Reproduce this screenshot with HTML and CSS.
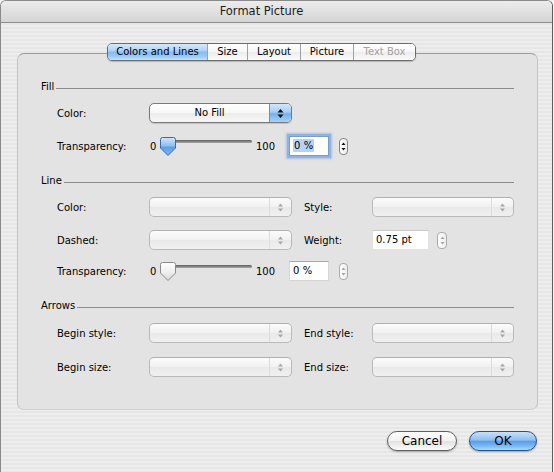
FILE: index.html
```html
<!DOCTYPE html>
<html lang="en">
<head>
<meta charset="utf-8">
<title>Format Picture</title>
<link rel="stylesheet" href="styles.css">
</head>
<body>
<div class="window">
  <div class="titlebar">Format Picture</div>
  <div class="content">
    <div class="tabs">
      <div class="tab tab-1 selected">Colors and Lines</div>
      <div class="tab tab-2">Size</div>
      <div class="tab tab-3">Layout</div>
      <div class="tab tab-4">Picture</div>
      <div class="tab tab-5 disabled">Text Box</div>
    </div>
    <div class="groupbox">
      <div class="section-head"><span class="section-title">Fill</span><div class="rule"></div></div>
      <div class="row row-first">
        <span class="lbl">Color:</span>
        <div class="popup popup-active">
          <span class="popup-text">No Fill</span>
          <span class="popup-arrows"><svg width="7" height="11" viewBox="0 0 7 11"><path d="M3.5 1 L6.5 4.5 H0.5 Z M0.5 6.5 H6.5 L3.5 10 Z" fill="#111"/></svg></span>
        </div>
      </div>
      <div class="row row-slider">
        <span class="lbl">Transparency:</span>
        <div class="slider-group">
          <span class="minv">0</span>
          <div class="slider">
            <div class="track"></div>
            <svg class="thumb" width="16" height="19" viewBox="0 0 16 19">
              <defs>
                <linearGradient id="tb" x1="0" y1="0" x2="0" y2="1">
                  <stop offset="0" stop-color="#d2e6fb"/>
                  <stop offset="0.45" stop-color="#8fc0f1"/>
                  <stop offset="0.55" stop-color="#5c9fe8"/>
                  <stop offset="1" stop-color="#7fb9f2"/>
                </linearGradient>
              </defs>
              <path d="M2.5 0.5 H13.5 Q15.5 0.5 15.5 2.5 V11 L8 18.5 L0.5 11 V2.5 Q0.5 0.5 2.5 0.5 Z" fill="url(#tb)" stroke="#3d68a8"/>
            </svg>
          </div>
          <span class="maxv">100</span>
          <div class="field field-pct focus"><span class="sel">0 %</span></div>
          <div class="stepper stepper-pct stepper-on"><svg width="5" height="11" viewBox="0 0 5 11"><path d="M2.5 1.5 L4.5 4 H0.5 Z M0.5 7 H4.5 L2.5 9.5 Z" fill="#111"/></svg></div>
        </div>
      </div>

      <div class="section-head head-gap"><span class="section-title">Line</span><div class="rule"></div></div>
      <div class="row row-first">
        <span class="lbl">Color:</span>
        <div class="popup"><span class="popup-text"></span><span class="popup-arrows"><svg width="7" height="11" viewBox="0 0 7 11"><path d="M3.5 1.5 L6 4.5 H1 Z M1 6.5 H6 L3.5 9.5 Z" fill="#a6a6a6"/></svg></span></div>
        <span class="lbl lbl2">Style:</span>
        <div class="popup popup-right"><span class="popup-text"></span><span class="popup-arrows"><svg width="7" height="11" viewBox="0 0 7 11"><path d="M3.5 1.5 L6 4.5 H1 Z M1 6.5 H6 L3.5 9.5 Z" fill="#a6a6a6"/></svg></span></div>
      </div>
      <div class="row row-dashed">
        <span class="lbl">Dashed:</span>
        <div class="popup"><span class="popup-text"></span><span class="popup-arrows"><svg width="7" height="11" viewBox="0 0 7 11"><path d="M3.5 1.5 L6 4.5 H1 Z M1 6.5 H6 L3.5 9.5 Z" fill="#a6a6a6"/></svg></span></div>
        <span class="lbl lbl2">Weight:</span>
        <div class="field-group">
          <div class="field field-weight">0.75 pt</div>
          <div class="stepper stepper-weight"><svg width="5" height="11" viewBox="0 0 5 11"><path d="M2.5 1.5 L4.5 4 H0.5 Z M0.5 7 H4.5 L2.5 9.5 Z" fill="#a6a6a6"/></svg></div>
        </div>
      </div>
      <div class="row row-slider row-slider2">
        <span class="lbl">Transparency:</span>
        <div class="slider-group">
          <span class="minv">0</span>
          <div class="slider">
            <div class="track"></div>
            <svg class="thumb" width="16" height="19" viewBox="0 0 16 19">
              <defs>
                <linearGradient id="tg" x1="0" y1="0" x2="0" y2="1">
                  <stop offset="0" stop-color="#ffffff"/>
                  <stop offset="0.5" stop-color="#f0f0f0"/>
                  <stop offset="1" stop-color="#d9d9d9"/>
                </linearGradient>
              </defs>
              <path d="M2.5 0.5 H13.5 Q15.5 0.5 15.5 2.5 V11 L8 18.5 L0.5 11 V2.5 Q0.5 0.5 2.5 0.5 Z" fill="url(#tg)" stroke="#8a8a8a"/>
            </svg>
          </div>
          <span class="maxv">100</span>
          <div class="field field-pct">0 %</div>
          <div class="stepper stepper-pct"><svg width="5" height="11" viewBox="0 0 5 11"><path d="M2.5 1.5 L4.5 4 H0.5 Z M0.5 7 H4.5 L2.5 9.5 Z" fill="#a6a6a6"/></svg></div>
        </div>
      </div>

      <div class="section-head head-gap"><span class="section-title">Arrows</span><div class="rule"></div></div>
      <div class="row row-arrow1">
        <span class="lbl">Begin style:</span>
        <div class="popup"><span class="popup-text"></span><span class="popup-arrows"><svg width="7" height="11" viewBox="0 0 7 11"><path d="M3.5 1.5 L6 4.5 H1 Z M1 6.5 H6 L3.5 9.5 Z" fill="#a6a6a6"/></svg></span></div>
        <span class="lbl lbl2">End style:</span>
        <div class="popup popup-right"><span class="popup-text"></span><span class="popup-arrows"><svg width="7" height="11" viewBox="0 0 7 11"><path d="M3.5 1.5 L6 4.5 H1 Z M1 6.5 H6 L3.5 9.5 Z" fill="#a6a6a6"/></svg></span></div>
      </div>
      <div class="row row-arrow2">
        <span class="lbl">Begin size:</span>
        <div class="popup"><span class="popup-text"></span><span class="popup-arrows"><svg width="7" height="11" viewBox="0 0 7 11"><path d="M3.5 1.5 L6 4.5 H1 Z M1 6.5 H6 L3.5 9.5 Z" fill="#a6a6a6"/></svg></span></div>
        <span class="lbl lbl2">End size:</span>
        <div class="popup popup-right"><span class="popup-text"></span><span class="popup-arrows"><svg width="7" height="11" viewBox="0 0 7 11"><path d="M3.5 1.5 L6 4.5 H1 Z M1 6.5 H6 L3.5 9.5 Z" fill="#a6a6a6"/></svg></span></div>
      </div>
    </div>
    <div class="buttons">
      <div class="btn btn-cancel">Cancel</div>
      <div class="btn btn-ok">OK</div>
    </div>
  </div>
</div>
</body>
</html>
```

FILE: styles.css
```css
html, body {
  margin: 0;
  padding: 0;
}
body {
  background: #f4f4f4;
  font-family: "DejaVu Sans", sans-serif;
  font-size: 10px;
  color: #000;
  width: 554px;
  height: 472px;
  overflow: hidden;
}
.window {
  width: 553px;
  height: 472px;
  box-sizing: border-box;
  border: 1px solid #8a8a8a;
  border-right-color: #5a5a5a;
  border-bottom: none;
  border-radius: 6px 6px 0 0;
  overflow: hidden;
  background: repeating-linear-gradient(to bottom, #eeeeee 0, #eeeeee 2px, #e6e6e6 2px, #e6e6e6 4px);
}
.titlebar {
  height: 21px;
  line-height: 21px;
  text-align: center;
  font-size: 11.5px;
  color: #1b1b1b;
  padding-right: 30px;
  background: linear-gradient(to bottom, #ececec, #d5d5d5);
  border-bottom: 1px solid #8e8e8e;
}
.content {
  padding: 20px 0 0 16px;
}
.tabs {
  display: flex;
  width: fit-content;
  height: 18px;
  box-sizing: border-box;
  margin-left: 90px;
  border: 1px solid #6c6c6c;
  border-radius: 5px;
  overflow: hidden;
  position: relative;
  z-index: 1;
  box-shadow: 0 1px 1px rgba(0,0,0,0.2);
}
.tab {
  height: 16px;
  line-height: 16px;
  text-align: center;
  box-sizing: border-box;
  background: linear-gradient(to bottom, #ffffff 0%, #f6f6f6 50%, #ececec 51%, #fbfbfb 100%);
}
.tab + .tab {
  border-left: 1px solid #a0a0a0;
}
.tab-1 { width: 99px; }
.tab-2 { width: 40px; }
.tab-3 { width: 53px; }
.tab-4 { width: 53px; }
.tab-5 { width: 62px; }
.tab.selected {
  background: linear-gradient(to bottom, #d6e9fc 0%, #b1d4f6 40%, #86bdf2 52%, #95c8f7 75%, #c2e3fe 100%);
}
.tab.disabled {
  color: #a3a3a3;
}
.groupbox {
  width: 521px;
  box-sizing: border-box;
  margin-top: -8px;
  border: 1px solid #c4c4c4;
  border-top-color: #9c9c9c;
  border-bottom-color: #cfcfcf;
  border-radius: 7px;
  background: #e3e3e3;
  padding: 27px 23px 32px 23px;
}
.section-head {
  display: flex;
  align-items: flex-start;
  height: 12px;
  line-height: 12px;
}
.head-gap {
  margin-top: 18px;
}
.section-title {
  padding-right: 2px;
}
.rule {
  flex: 1;
  height: 7px;
  border-bottom: 1px solid #8c8c8c;
}
.row {
  display: grid;
  grid-template-columns: 92px 143px 12px 68px 142px;
  align-items: center;
  height: 20px;
  margin-left: 16px;
}
.row-first { margin-top: 10px; }
.row-slider { height: 22px; margin-top: 12px; }
.row-dashed { margin-top: 13px; }
.row-slider2 { margin-top: 10px; }
.row-arrow1 { margin-top: 11px; }
.row-arrow2 { margin-top: 14px; }
.lbl {
  white-space: nowrap;
}
.lbl2 {
  grid-column: 4;
}
.popup {
  display: flex;
  height: 20px;
  box-sizing: border-box;
  border: 1px solid #b9b9b9;
  border-top-color: #b0b0b0;
  border-radius: 5px;
  background: linear-gradient(to bottom, #fbfbfb 0%, #f1f1f1 50%, #e9e9e9 52%, #f0f0f0 100%);
  overflow: hidden;
}
.popup-right {
  width: 142px;
}
.popup-text {
  flex: 1;
  text-align: center;
  line-height: 18px;
}
.popup-arrows {
  width: 21px;
  border-left: 1px solid #dcdcdc;
  display: flex;
  align-items: center;
  justify-content: center;
}
.popup-active {
  border-color: #7a7a7a;
  box-shadow: 0 1px 1px rgba(0,0,0,0.15);
  background: linear-gradient(to bottom, #ffffff 0%, #f7f7f7 50%, #ececec 52%, #f7f7f7 100%);
}
.popup-active .popup-arrows {
  border-left: 1px solid #6f8fb8;
  background: linear-gradient(to bottom, #d3e7fb 0%, #a7cdf5 45%, #73b1ee 55%, #a6d3fb 100%);
}
.slider-group {
  grid-column: 2 / span 4;
  display: flex;
  align-items: center;
  height: 22px;
}
.minv {
  width: 9px;
  padding-left: 1px;
  box-sizing: border-box;
}
.slider {
  position: relative;
  width: 95px;
  height: 19px;
}
.track {
  margin: 3px 1px 0 6px;
  height: 3px;
  border-radius: 2px;
  background: linear-gradient(to bottom, #5e5e5e, #a8a8a8);
}
.thumb {
  position: absolute;
  left: 2px;
  top: 0;
}
.maxv {
  margin-left: 3px;
}
.field {
  box-sizing: border-box;
  height: 20px;
  line-height: 18px;
  background: #fff;
  border: 1px solid #d6d6d6;
  border-top-color: #a9a9a9;
  padding-left: 3px;
}
.field-pct {
  width: 40px;
  margin-left: 14px;
}
.focus {
  box-shadow: 0 0 0 2px #8fb4e4, 0 0 2px 3px rgba(110,160,225,0.5);
  border-color: #7d9cc4;
}
.sel {
  background: #b7d2f7;
  padding: 1px 1px;
}
.stepper {
  box-sizing: border-box;
  width: 9px;
  height: 17px;
  border: 1px solid #ababab;
  border-radius: 4px;
  background: linear-gradient(to right, #ffffff, #ededed);
  display: flex;
  align-items: center;
  justify-content: center;
}
.stepper-pct {
  margin-left: 10px;
}
.stepper-on {
  border-color: #858585;
}
.field-group {
  display: flex;
  align-items: center;
}
.field-weight {
  width: 57px;
  border-color: #e2e2e2;
  border-top-color: #c9c9c9;
}
.stepper-weight {
  margin-left: 8px;
  width: 10px;
}
.buttons {
  width: 521px;
  display: flex;
  justify-content: flex-end;
  margin-top: 21px;
}
.btn {
  box-sizing: border-box;
  height: 20px;
  line-height: 18px;
  border-radius: 10px;
  text-align: center;
  font-size: 12px;
  box-shadow: 0 1px 2px rgba(0,0,0,0.3);
}
.btn-cancel {
  width: 70px;
  border: 1px solid #5f5f5f;
  background: linear-gradient(to bottom, #fdfdfd 0%, #f2f2f2 50%, #e2e2e2 52%, #fbfbfb 100%);
}
.btn-ok {
  width: 68px;
  margin-left: 12px;
  margin-right: 1px;
  border: 1px solid #2d4f8e;
  background: linear-gradient(to bottom, #c9e0f8 0%, #8fbff0 45%, #5b9de7 52%, #7dbcf6 80%, #a9dbff 100%);
}
```
